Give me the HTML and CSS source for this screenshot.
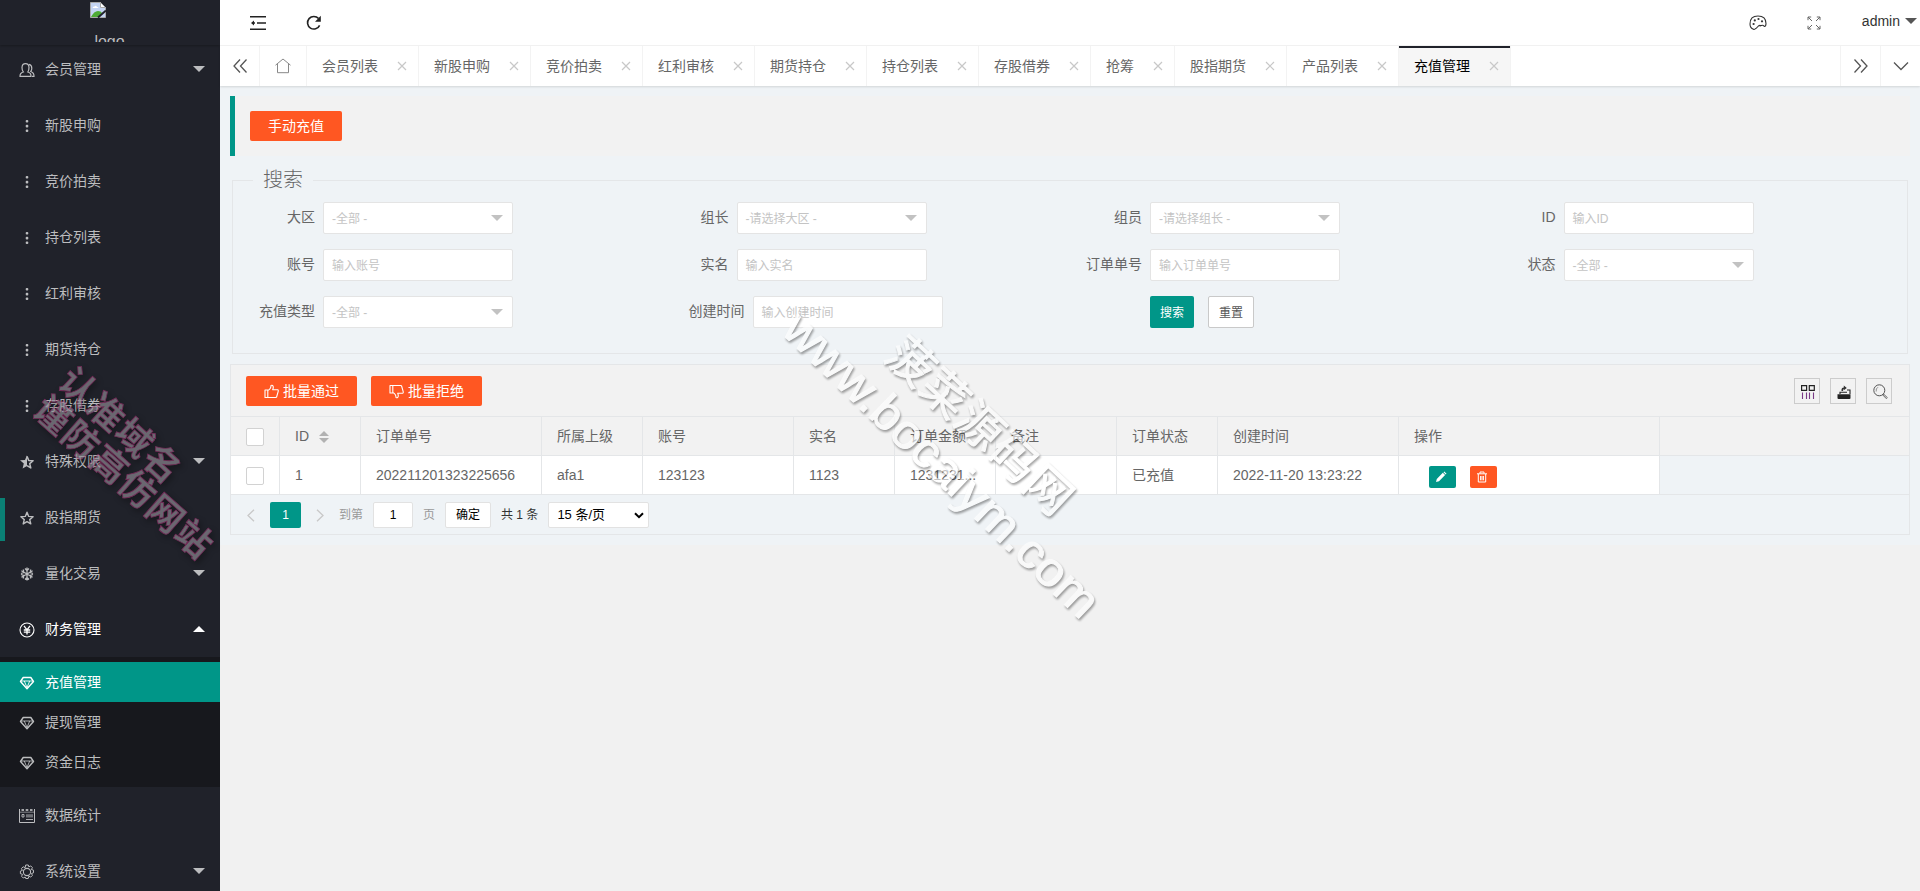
FILE: index.html
```html
<!DOCTYPE html>
<html lang="zh-CN">
<head>
<meta charset="utf-8">
<title>充值管理</title>
<link rel="stylesheet" href="styles.css">
</head>
<body>
<svg class="defs" width="0" height="0">
  <symbol id="dots" viewBox="0 0 16 16"><g fill="currentColor"><rect x="6.7" y="2" width="2.6" height="2.6" rx="1"/><rect x="6.7" y="6.8" width="2.6" height="2.6" rx="1"/><rect x="6.7" y="11.4" width="2.6" height="2.6" rx="1"/></g></symbol>
  <symbol id="gem" viewBox="0 0 16 16"><path d="M4.200 2.500h7.600l2.700 4L8 13.700 1.500 6.500z" fill="none" stroke="currentColor" stroke-width="1.400" stroke-linejoin="round"/><path d="M2 6h12M5.300 6L8 12.500 10.700 6" fill="none" stroke="currentColor" stroke-width=".9"/></symbol>
  <symbol id="close" viewBox="0 0 10 10"><path d="M1 1l8 8M9 1L1 9" fill="none" stroke="currentColor" stroke-width="1.2"/></symbol>
  <symbol id="star" viewBox="0 0 16 16"><path d="M8 2.200l1.700 4.200 4.400.3-3.400 2.900 1.100 4.300L8 11.600l-3.800 2.300 1.100-4.300-3.400-2.900 4.400-.3z" fill="none" stroke="currentColor" stroke-width="1.400" stroke-linejoin="round"/></symbol>
</svg>
<div class="app">
  <aside class="side">
    <div class="logo">
      <svg width="16" height="16" viewBox="0 0 16 16"><path d="M.5.5h10l5 5v10H.5z" fill="#c5d5f3" stroke="#a9a9a9"/><path d="M10.5.5v5h5z" fill="#fff" stroke="#a9a9a9"/><path d="M2.500 6q.5-2 2-1.500Q6 3 7 5q1.500 0 1.500 1z" fill="#fff"/><path d="M1 15q3-6 7-6 3 0 4 2l-4 4z" fill="#4fab35"/><path d="M8 15.500l8-7" stroke="#20222a" stroke-width="2"/></svg>
      <span>logo</span>
    </div>
    <nav class="menu">
      <a class="item"><svg class="ic" viewBox="0 0 16 16"><path d="M1 14.400q-.2-3.400 3.300-4.400Q3 8.500 3 5.500 3.200 1.600 6.500 1.600T10 5.500Q10 8.500 8.800 10q3.500 1 3.200 4.400zM10 2.300q2.800.5 2.800 4 0 2-1 3.200 3.400 1.300 3.200 4.900h-2" fill="none" stroke="currentColor" stroke-width="1.200"/></svg>会员管理<i class="caret"></i></a>
      <a class="item"><svg class="ic"><use href="#dots"/></svg>新股申购</a>
      <a class="item"><svg class="ic"><use href="#dots"/></svg>竞价拍卖</a>
      <a class="item"><svg class="ic"><use href="#dots"/></svg>持仓列表</a>
      <a class="item"><svg class="ic"><use href="#dots"/></svg>红利审核</a>
      <a class="item"><svg class="ic"><use href="#dots"/></svg>期货持仓</a>
      <a class="item"><svg class="ic"><use href="#dots"/></svg>存股借券</a>
      <a class="item"><svg class="ic" viewBox="0 0 16 16"><path d="M8 1.200v10.800l-4.400 2.600 1.200-5L1 6.300l5-.4z" fill="currentColor"/><path d="M8 2.200l1.700 4.200 4.400.3-3.400 2.900 1.100 4.300L8 11.600" fill="none" stroke="currentColor" stroke-width="1.500" stroke-linejoin="round"/></svg>特殊权限<i class="caret"></i></a>
      <a class="item hover"><svg class="ic"><use href="#star"/></svg>股指期货</a>
      <a class="item"><svg class="ic" viewBox="0 0 16 16"><path d="M8 1.500v13M2.400 4.800l11.200 6.400M13.600 4.800L2.400 11.200M6 2.500l2 2 2-2M6 13.500l2-2 2 2M2 7.500l2.800-1L4.300 3.500M14 8.500l-2.800 1 .5 3M2 8.500l2.800 1-.5 3M14 7.500l-2.800-1 .5-3" fill="none" stroke="currentColor" stroke-width="1.300"/></svg>量化交易<i class="caret"></i></a>
      <a class="item open"><svg class="ic" viewBox="0 0 16 16"><circle cx="8" cy="8" r="7" fill="none" stroke="currentColor" stroke-width="1.100"/><path d="M5 3.800l3 4 3-4M8 7.800v4.700M4.800 8h6.400M4.800 10.200h6.400" fill="none" stroke="currentColor" stroke-width="1.300"/></svg>财务管理<i class="caret up"></i></a>
      <div class="sub">
        <a class="subitem on"><svg class="ic"><use href="#gem"/></svg>充值管理</a>
        <a class="subitem"><svg class="ic"><use href="#gem"/></svg>提现管理</a>
        <a class="subitem"><svg class="ic"><use href="#gem"/></svg>资金日志</a>
      </div>
      <a class="item"><svg class="ic" viewBox="0 0 16 16"><path d="M.5 1v13.500h15V1" fill="none" stroke="currentColor"/><path d="M2.500 1h2.500v2H2.500zM6.700 1h2.600v2H6.700zM11 1h2.500v2H11zM.5 3.800h15v.8H.5z" fill="currentColor" opacity=".85"/><path d="M7 6.200h7v3.300H7z" fill="currentColor" opacity=".5"/><path d="M3 6.500h2v2.500H3zM7 11.500h7" fill="none" stroke="currentColor" stroke-width=".9"/></svg>数据统计</a>
      <a class="item"><svg class="ic" viewBox="0 0 16 16"><circle cx="8" cy="8" r="3.600" fill="none" stroke="currentColor" stroke-width="1.100"/><path d="M6.700 1h2.600l.5 1.900 1.900-1 1.700 1.700-1 1.900 2.100.7v2.600l-2 .7.900 1.900-1.700 1.700-1.900-.9-.6 2.300H6.700L6.200 13l-1.900 1-1.700-1.700.9-2-2.100-.6V7.100l2-.7-1-1.900L4.200 2.800l2 .9z" fill="none" stroke="currentColor" stroke-width="1" stroke-linejoin="round"/></svg>系统设置<i class="caret"></i></a>
    </nav>
  </aside>

  <main class="main">
    <header class="head">
      <div class="head-left">
        <svg width="16" height="16" viewBox="0 0 16 16"><path d="M0 1.700h16M7 8h9M0 14.300h16" stroke="#222" stroke-width="1.500"/><path d="M1 8l3-2.500v5z" fill="#222"/><path d="M3 8h2" stroke="#222" stroke-width="1.400"/></svg>
        <svg width="16" height="16" viewBox="0 0 16 16"><path d="M13.600 10.300A6.300 6.300 0 1 1 12.600 3.600" fill="none" stroke="#222" stroke-width="1.600"/><path d="M14.800.8v6H9z" fill="#222"/></svg>
      </div>
      <div class="head-right">
        <svg width="18" height="16" viewBox="0 0 18 16"><path d="M4.500 14.300Q1 13 1 9 1 1 9 1t8 7.500q0 3-1.700 3-1.300-1.700-3-1-1.500.7-.8 0-1.500-.6-2.800 1.200T6 14q-.7.800-1.500.3z" fill="none" stroke="#333" stroke-width="1.100"/><g fill="#333"><circle cx="4.600" cy="9" r="1.100"/><circle cx="5.800" cy="5.400" r="1.100"/><circle cx="9.500" cy="4" r="1.100"/><circle cx="13" cy="6.300" r="1.100"/></g></svg>
        <svg width="14" height="14" viewBox="0 0 14 14"><path d="M1 4.200V1h3.200M9.800 1H13v3.200M13 9.800V13H9.800M4.200 13H1V9.800M1 1l4 4M13 1L9 5M13 13L9 9M1 13l4-4" fill="none" stroke="#666" stroke-width="1"/></svg>
        <span class="user">admin<i class="caret"></i></span>
      </div>
    </header>

    <div class="tabs">
      <span class="ctl"><svg width="14" height="14" viewBox="0 0 14 14"><path d="M7 .5L1 7l6 6.500M13.500.5L7.500 7l6 6.500" fill="none" stroke="#555" stroke-width="1.300"/></svg></span>
      <span class="home"><svg width="16" height="16" viewBox="0 0 16 16"><path d="M.5 7.200L8 1l7.500 6.200M2.500 6v8.700h11V6" fill="none" stroke="#888" stroke-width="1"/></svg></span>
      <span class="tab">会员列表<svg><use href="#close"/></svg></span>
      <span class="tab">新股申购<svg><use href="#close"/></svg></span>
      <span class="tab">竞价拍卖<svg><use href="#close"/></svg></span>
      <span class="tab">红利审核<svg><use href="#close"/></svg></span>
      <span class="tab">期货持仓<svg><use href="#close"/></svg></span>
      <span class="tab">持仓列表<svg><use href="#close"/></svg></span>
      <span class="tab">存股借券<svg><use href="#close"/></svg></span>
      <span class="tab">抢筹<svg><use href="#close"/></svg></span>
      <span class="tab">股指期货<svg><use href="#close"/></svg></span>
      <span class="tab">产品列表<svg><use href="#close"/></svg></span>
      <span class="tab cur">充值管理<svg><use href="#close"/></svg></span>
      <span class="ctl right first"><svg width="14" height="14" viewBox="0 0 14 14"><path d="M.5.5l6 6.500-6 6.500M7 .5L13 7l-6 6.500" fill="none" stroke="#555" stroke-width="1.300"/></svg></span>
      <span class="ctl right"><svg width="16" height="14" viewBox="0 0 16 14"><path d="M1 3.500l7 7 7-7" fill="none" stroke="#555" stroke-width="1.300"/></svg></span>
    </div>

    <section class="body">
      <div class="quote"><button class="btn">手动充值</button></div>

      <fieldset class="search">
        <legend>搜索</legend>
        <div class="grid">
          <div class="fi"><label>大区</label><div class="inp">-全部 -<i></i></div></div>
          <div class="fi"><label>组长</label><div class="inp">-请选择大区 -<i></i></div></div>
          <div class="fi"><label>组员</label><div class="inp">-请选择组长 -<i></i></div></div>
          <div class="fi"><label>ID</label><div class="inp">输入ID</div></div>
          <div class="fi"><label>账号</label><div class="inp">输入账号</div></div>
          <div class="fi"><label>实名</label><div class="inp">输入实名</div></div>
          <div class="fi"><label>订单单号</label><div class="inp">输入订单单号</div></div>
          <div class="fi"><label>状态</label><div class="inp">-全部 -<i></i></div></div>
          <div class="fi"><label>充值类型</label><div class="inp">-全部 -<i></i></div></div>
          <div class="fi wide"><label>创建时间</label><div class="inp">输入创建时间</div></div>
          <div class="fi acts"><button class="go">搜索</button><button class="reset">重置</button></div>
        </div>
      </fieldset>

      <div class="table">
        <div class="tool">
          <button class="btn"><svg width="15" height="15" viewBox="0 0 15 15"><path d="M1 6h2.800v7.500H1zM3.800 6.500Q7 5 7 1.500q2-.8 2.300 1.500 0 1.500-.6 2.800h5.100q.7.300.4 1.500l-1.600 5.700-.8.500h-8" fill="none" stroke="#fff" stroke-width="1.100" stroke-linejoin="round"/></svg>批量通过</button>
          <button class="btn"><svg width="15" height="15" viewBox="0 0 15 15"><path d="M1 9h2.800V1.500H1zM3.800 8.500Q7 10 7 13.500q2 .8 2.300-1.500 0-1.500-.6-2.800h5.100q.7-.3.400-1.500L12.600 2l-.8-.5h-8" fill="none" stroke="#fff" stroke-width="1.100" stroke-linejoin="round"/></svg>批量拒绝</button>
          <div class="tool-right">
            <span><svg width="14" height="14" viewBox="0 0 14 14"><path d="M.6.600h5v4.800h-5zM8.300.600h5v4.800h-5z" fill="none" stroke="#222" stroke-width="1.200"/><path d="M1.500 7.500V14M5.500 7.500V14M8.500 7.500V14M12.500 7.500V14" stroke="#7a3a86" stroke-width="1.100"/></svg></span>
            <span><svg width="14" height="14" viewBox="0 0 14 14"><path d="M.5 9.200h13V13q0 1-1 1h-11q-1 0-1-1z" fill="#222"/><path d="M3 9V7.200h7M13 9V5h-3" fill="none" stroke="#222" stroke-width="1.100"/><path d="M4.500 6V4.500q0-2 2.300-2V.5l3 2.500-3 2.300V4Q6 4 6 6z" fill="#333"/></svg></span>
            <span><svg width="15" height="15" viewBox="0 0 15 15"><circle cx="6.300" cy="6.300" r="5.500" fill="none" stroke="#555" stroke-width="1"/><path d="M3.200 7.500q-.6-3 1.800-4.300" fill="none" stroke="#777" stroke-width=".8"/><path d="M10.500 10l3.800 3.600-1 1L9.800 11z" fill="none" stroke="#555" stroke-width=".9"/></svg></span>
          </div>
        </div>
        <div class="row th">
          <div><b class="ck"></b></div><div>ID<span class="sort"></span></div><div>订单单号</div><div>所属上级</div><div>账号</div><div>实名</div><div>订单金额</div><div>备注</div><div>订单状态</div><div>创建时间</div><div>操作</div>
        </div>
        <div class="row td">
          <div><b class="ck"></b></div><div>1</div><div>202211201323225656</div><div>afa1</div><div>123123</div><div>1123</div><div>1231231...</div><div></div><div>已充值</div><div>2022-11-20 13:23:22</div>
          <div class="ops"><button class="mini edit"><svg width="12" height="12" viewBox="0 0 12 12"><path d="M1 11l.8-3L7.800 1.800l2.300 2.300L4 10.200zM8.500 1.200l.8-.7 2.200 2.200-.8.800z" fill="#fff"/></svg></button><button class="mini del"><svg width="12" height="12" viewBox="0 0 12 12"><path d="M1 2.800h10M4 2.500V1h4v1.500M2.300 3v8h7.400V3M4.600 5v4.300M6 5v4.300M7.400 5v4.300" fill="none" stroke="#fff" stroke-width="1"/></svg></button></div>
        </div>
        <div class="page">
          <svg class="prev" width="8" height="13" viewBox="0 0 8 13"><path d="M7 .7L1 6.500l6 5.800" fill="none" stroke="#c8c8c8" stroke-width="1.300"/></svg>
          <em>1</em>
          <svg class="next" width="8" height="13" viewBox="0 0 8 13"><path d="M1 .7l6 5.800-6 5.800" fill="none" stroke="#c8c8c8" stroke-width="1.300"/></svg>
          <span class="skip">到第</span><span class="box num">1</span><span class="skip ye">页</span><span class="box ok">确定</span><span class="count">共 1 条</span>
          <span class="box sel">15 条/页<svg width="10" height="7" viewBox="0 0 10 7"><path d="M1 1.200l4 4 4-4" fill="none" stroke="#000" stroke-width="2"/></svg></span>
        </div>
      </div>
    </section>
  </main>
</div>

<svg class="mark" width="1920" height="891" viewBox="0 0 1920 891">
  <g class="mark-main">
    <text transform="translate(780 332) rotate(43.800)" font-size="48" textLength="417" lengthAdjust="spacingAndGlyphs">www.bocaiym.com</text>
    <text transform="translate(883 358) rotate(43)" font-size="46" textLength="234">菠菜源码网</text>
  </g>
  <g class="mark-side">
    <text transform="translate(56 384) rotate(42.500)" font-size="36" textLength="150">认准域名</text>
    <text transform="translate(31 413) rotate(41.300)" font-size="36" textLength="223">谨防高仿网站</text>
  </g>
</svg>
</body>
</html>
```

FILE: styles.css
```css
* { box-sizing: border-box; }
body {
  margin: 0;
  height: 891px;
  overflow: hidden;
  background: #f1f1f1;
  color: #666;
  font: 14px/24px "Liberation Sans", "Noto Sans CJK SC", sans-serif;
}
button { font-family: inherit; border: 0; padding: 0; }
.defs { display: block; height: 0; }
.app { display: flex; height: 891px; }

/* sidebar */
.side { width: 220px; flex: none; background: #20222a; color: #bcbdbf; overflow: hidden; }
.logo {
  height: 45px;
  padding: 2px 0 3px;
  box-shadow: 0 1px 2px rgba(0, 0, 0, .25);
  text-align: center;
  font-size: 16px;
}
.logo svg { display: block; margin-left: 90px; }
.logo span { display: block; height: 24px; line-height: 47px; overflow: hidden; margin-left: -1px; }
.menu { margin-top: -4px; }
.item, .subitem { display: flex; align-items: center; height: 56px; padding: 0 15px 0 19px; line-height: 20px; }
.item .ic, .subitem .ic { width: 16px; height: 16px; margin-right: 10px; flex: none; position: relative; top: 1px; }
.subitem { height: 40px; }
.subitem.on { background: #009688; color: #fff; }
.sub { padding: 5px 0; background: #17181d; }
.item.open { color: #fff; }
.item.hover { background: linear-gradient(#0a8074, #0a8074) 0 9px / 5px 43px no-repeat; }
.caret { border: 6px solid transparent; border-top-color: currentColor; border-bottom: 0; margin-left: auto; }
.caret.up { border-top: 0; border-bottom: 6px solid currentColor; }

/* top bar */
.main { flex: 1; min-width: 0; }
.head { display: flex; justify-content: space-between; height: 46px; background: #fff; border-bottom: 1px solid #f3f3f3; }
.head-left { display: flex; align-items: center; gap: 40px; padding-left: 30px; }
.head-right { display: flex; align-items: center; color: #333; padding-right: 3px; }
.head-right > svg:first-child { margin-right: 40px; }
.head-right > svg:nth-child(2) { margin-right: 41px; }
.user { display: flex; align-items: center; gap: 5px; margin-top: -3px; }
.user .caret { color: #555; }

.tabs { display: flex; height: 40px; background: #fff; box-shadow: 0 1px 2px rgba(0, 0, 0, .12); position: relative; line-height: 40px; }
.ctl, .home { display: flex; align-items: center; justify-content: center; width: 40px; border-right: 1px solid #f3f3f3; }
.home { width: 47px; }
.ctl.right { border-right: 0; border-left: 1px solid #f3f3f3; }
.ctl.first { margin-left: auto; }
.tab { display: flex; align-items: center; height: 40px; padding: 0 11px 0 15px; border-right: 1px solid #f3f3f3; white-space: nowrap; line-height: 34px; }
.tab svg { width: 10px; height: 10px; margin-left: 19px; color: #c8c8c8; }
.tab.cur { background: #f6f6f6; color: #000; box-shadow: inset 0 2px #20222a; }

/* content */
.body { height: 459px; padding: 10px; background: #eff3f6; }
.quote { height: 60px; padding: 15px; border-left: 5px solid #009688; background: #f2f2f2; }
.btn {
  display: inline-flex;
  align-items: center;
  height: 30px;
  padding: 0 18px;
  border-radius: 2px;
  background: #ff5722;
  color: #fff;
  font-size: 14px;
  line-height: 30px;
}
.btn svg { margin-right: 4px; }
.search { height: 186px; margin: 12px 2px 10px; padding: 0 10px; border: 1px solid #e4e6e8; min-width: 0; }
.search legend { margin-left: 10px; padding: 0 10px; font-size: 20px; line-height: 24px; font-weight: 300; }
.grid { display: grid; grid-template-columns: repeat(4, 1fr); row-gap: 15px; padding-top: 10px; }
.fi { display: flex; height: 32px; }
.fi label { width: 80px; padding-right: 8px; text-align: right; line-height: 30px; white-space: nowrap; }
.fi.wide label { width: 96px; }
.inp {
  display: flex;
  align-items: center;
  justify-content: space-between;
  width: 190px;
  padding: 2px 9px 0 8px;
  border: 1px solid #e4e4e4;
  border-radius: 2px;
  background: #fff;
  color: #c4c4c4;
  font-size: 12px;
}
.inp i { border: 6px solid transparent; border-top-color: #c2c2c2; border-bottom: 0; margin-top: -3px; }
.acts { padding-left: 80px; gap: 14px; }
.go, .reset { width: 44px; padding-bottom: 2px; font-size: 12px; border-radius: 2px; background: #009688; color: #fff; }
.reset { width: 46px; background: #fff; border: 1px solid #c9c9c9; color: #555; }

/* table */
.table { height: 171px; border: 1px solid #e4e6e8; }
.tool { display: flex; align-items: flex-start; gap: 14px; height: 52px; padding: 11px 17px 0 15px; background: #f2f2f2; border-bottom: 1px solid #e4e6e8; }
.tool-right { display: flex; gap: 10px; margin: 2px 0 0 auto; }
.tool-right span { display: flex; align-items: center; justify-content: center; width: 26px; height: 26px; border: 1px solid #ccc; padding: 1px 0 0 2px; }
.row { display: grid; grid-template-columns: 49px 81px 181px 101px 151px 101px 101px 121px 101px 181px 261px; height: 39px; border-bottom: 1px solid #e4e6e8; }
.row > div { display: flex; align-items: center; padding: 0 0 0 15px; border-right: 1px solid #e4e6e8; white-space: nowrap; overflow: hidden; }
.th { background: #f2f2f2; }
.td > div { background: #fff; }
.ck { width: 18px; height: 18px; margin-top: 2px; border: 1px solid #d2d2d2; border-radius: 2px; background: #fff; }
.sort { display: inline-flex; flex-direction: column; gap: 2px; margin: 2px 0 0 10px; }
.sort::before, .sort::after { content: ""; border: 5px solid transparent; }
.sort::before { border-top: 0; border-bottom-color: #b2b2b2; }
.sort::after { border-bottom: 0; border-top-color: #b2b2b2; }
.row > .ops { padding: 3px 0 0 30px; gap: 14px; }
.mini { display: flex; align-items: center; justify-content: center; width: 27px; height: 22px; border-radius: 2px; padding-right: 3px; }
.edit { background: #009688; }
.del { background: #ff5722; }
.page { display: flex; align-items: center; height: 39px; padding: 1px 0 0 16px; font-size: 12px; color: #333; }
.page em { width: 31px; height: 26px; margin: 0 15px; border-radius: 2px; background: #009688; color: #fff; font-style: normal; text-align: center; line-height: 26px; }
.skip { color: #999; margin: 0 10px 0 15px; }
.skip.ye { margin: 0 10px; }
.box { height: 26px; border: 1px solid #e2e2e2; border-radius: 2px; background: #fff; color: #000; text-align: center; }
.num { width: 40px; }
.ok { width: 46px; }
.count { margin: 0 10px; }
.sel { display: flex; align-items: center; justify-content: space-between; width: 101px; padding: 0 4px 0 8px; font-size: 13px; }

/* watermark overlay */
.mark { position: absolute; left: 0; top: 0; pointer-events: none; }
.mark text { font-family: "Liberation Sans", "Noto Sans CJK SC", sans-serif; }
.mark-main { fill: #fff; stroke: #fff; stroke-width: 1; opacity: .6; filter: drop-shadow(1px 2px 1px rgba(0, 0, 0, .6)); }
.mark-side { fill: #8d8892; stroke: #9a2f6c; stroke-width: .8; font-weight: 700; opacity: .68; filter: drop-shadow(2px 3px 3px rgba(0, 0, 0, .5)); }
```
